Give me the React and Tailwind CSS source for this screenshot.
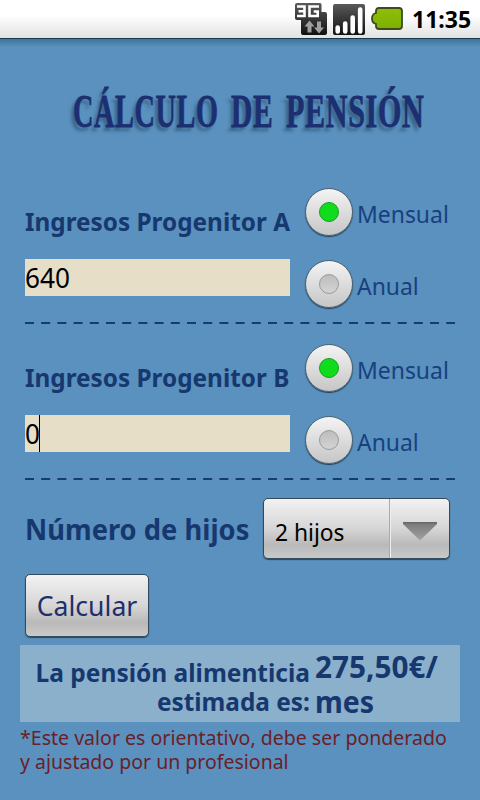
import React from 'react';

function StatusBar() {
  return (
    <div className="h-[38px] flex items-center justify-end pr-[9px] bg-linear-to-b from-white from-40% to-[#e2e2e2]">
      <svg className="mr-[6px]" width="32" height="34" viewBox="0 0 32 34">
        <defs>
          <linearGradient id="dark" x1="0" y1="0" x2="0" y2="1">
            <stop offset="0" stopColor="#5a5a5a" />
            <stop offset="1" stopColor="#111" />
          </linearGradient>
        </defs>
        <path d="M2 1h23q1.500 0 1.500 1.500V10H30q2 0 2 2v19q0 2-2 2H8q-2 0-2-2V18H2q-2 0-2-2V3q0-2 2-2z" fill="url(#dark)" />
        <path d="M2 4.500h7.500v9.500H2M3.500 9.200h6M24 4.500h-9.500v9.500h8.200V9.500h-4" fill="none" stroke="#fff" strokeWidth="2.600" />
        <path d="M14.500 18.500l5 6h-3v6h-4v-6h-3z" fill="#a0a0a0" />
        <path d="M24 31.500l-5-6h3v-6h4v6h3z" fill="#a0a0a0" />
      </svg>
      <svg className="mr-[6px]" width="32" height="34" viewBox="0 0 32 34">
        <rect x="0" y="2" width="32" height="31" rx="2" fill="url(#dark)" />
        <path d="M4.700 29.500v-4M12.200 29.500v-8M19.700 29.500v-14M27.200 29.500v-22" stroke="#fff" strokeWidth="4.600" strokeLinecap="round" />
      </svg>
      <svg className="mr-[9px]" width="32" height="26" viewBox="0 0 32 26">
        <defs>
          <linearGradient id="green" x1="0" y1="0" x2="0" y2="1">
            <stop offset="0" stopColor="#8fbe08" />
            <stop offset="1" stopColor="#7cb000" />
          </linearGradient>
        </defs>
        <path d="M8 2h20q3 0 3 3v15q0 3-3 3H8q-3 0-3-3v-2q-4-1-4-5.500T5 7V5q0-3 3-3z" fill="url(#green)" stroke="#3c4a1c" strokeWidth="1.800" />
      </svg>
      <span className="w-[59px] text-[23px] leading-[38px] font-bold text-black whitespace-nowrap">11:35</span>
    </div>
  );
}

function Radio({ label, checked }) {
  return (
    <div className="h-[72px] flex items-center gap-[4px]">
      <span className="w-[48px] h-[48px] shrink-0 rounded-full border border-[#4f6470] bg-linear-to-b from-[#f4f4f4] to-[#c6c6c6] shadow-[0_1px_1px_rgba(10,25,40,0.7)] flex items-center justify-center">
        {checked ? (
          <span className="w-[20px] h-[20px] rounded-full border border-[#1b9c22] bg-[#0fdc1c]" />
        ) : (
          <span className="w-[20px] h-[20px] rounded-full border border-[#999] bg-linear-to-b from-[#bdbdbd] to-[#d4d4d4]" />
        )}
      </span>
      <span className="mt-[3px] text-[24px] leading-[28px] text-[#18407f] whitespace-nowrap inline-block origin-left scale-x-[0.955]">{label}</span>
    </div>
  );
}

function Divider() {
  return (
    <svg className="block" width="430" height="2" viewBox="0 0 430 2">
      <path d="M0 1H430" stroke="#163a72" strokeWidth="2" strokeDasharray="9 7.200" />
    </svg>
  );
}

function Income({ title, value, focused }) {
  return (
    <section className="h-[156px]">
      <div className="h-[146px] flex gap-[15px]">
        <div className="w-[265px] pt-[29px]">
          <h2 className="text-[25px] leading-[32px] font-bold text-[#16386f] whitespace-nowrap">
            <span className="inline-block origin-left scale-x-[0.973]">{title}</span>
          </h2>
          <div className="mt-[22px] h-[37px] flex items-center bg-[#e6dec6] text-[27px] leading-[37px] text-black">
            <span className="inline-block origin-left scale-x-[0.97]">{value}</span>
            {focused && <span className="w-px h-[37px] bg-black -ml-px" />}
          </div>
        </div>
        <div>
          <Radio label="Mensual" checked />
          <Radio label="Anual" />
        </div>
      </div>
      <Divider />
    </section>
  );
}

export default function App() {
  return (
    <div className="w-[480px] h-[800px] overflow-hidden bg-[#5a91be] font-['Noto_Sans',sans-serif]">
      <StatusBar />
      <div className="h-[9px] border-t border-[#17384d] bg-linear-to-b from-[#3f749c] to-[#5a91be]" />
      <main className="px-[25px]">
        <h1 className="h-[129px] pt-[36px] pl-[48px] flex font-['Liberation_Serif',serif] font-bold text-[47px] leading-[56px] tracking-[1px] text-[#1c2f70] whitespace-nowrap [text-shadow:-5px_4px_4px_rgba(25,55,85,0.5)] [-webkit-text-stroke:0.8px_#1c2f70]">
          <span className="w-[158px]"><span className="inline-block origin-left scale-x-[0.602]">CÁLCULO</span></span>
          <span className="w-[55px]"><span className="inline-block origin-left scale-x-[0.63]">DE</span></span>
          <span className="w-[140px]"><span className="inline-block origin-left scale-x-[0.641]">PENSIÓN</span></span>
        </h1>
        <Income title="Ingresos Progenitor A" value="640" />
        <Income title="Ingresos Progenitor B" value="0" focused />
        <div className="h-[86px] pt-[10px] flex items-start">
          <div className="w-[238px] pt-[12px] text-[28px] leading-[38px] font-bold text-[#16386f] whitespace-nowrap">
            <span className="inline-block origin-left scale-x-[0.976]">Número de hijos</span>
          </div>
          <div className="w-[187px] h-[61px] flex rounded-[5px] border border-[#34495a] shadow-[0_1px_1px_rgba(10,25,40,0.6)] bg-[linear-gradient(#f2f2f2,#d6d6d6_50%,#b9b9b9_78%,#c9c9c9)]">
            <div className="w-[126px] pl-[11px] border-r border-[#aaa] text-[24px] leading-[65px] text-black whitespace-nowrap">
              <span className="inline-block origin-left scale-x-[0.95]">2 hijos</span>
            </div>
            <div className="flex-1 border-l border-[#eee] flex justify-center pt-[23px]">
              <svg width="34" height="19" viewBox="0 0 34 19">
                <defs>
                  <linearGradient id="arrow" x1="0" y1="0" x2="0" y2="1">
                    <stop offset="0" stopColor="#777" />
                    <stop offset="1" stopColor="#a2a2a2" />
                  </linearGradient>
                </defs>
                <path d="M0 0H34V2L17 18.500L0 2z" fill="url(#arrow)" />
                <path d="M0 .75H34" stroke="#686868" strokeWidth="1.500" />
              </svg>
            </div>
          </div>
        </div>
        <button className="w-[124px] h-[63px] pt-[2px] block rounded-[5px] border border-[#34495a] shadow-[0_1px_1px_rgba(10,25,40,0.6)] bg-[linear-gradient(#f2f2f2,#d6d6d6_50%,#b9b9b9_78%,#cacaca)] text-[27px] text-[#1f2f6c] whitespace-nowrap">
          <span className="inline-block scale-x-[0.985]">Calcular</span>
        </button>
      </main>
      <div className="mt-[8px] mx-[20px] h-[77px] flex gap-[5px] bg-[#8ab0cc] text-[#16386f] font-bold whitespace-nowrap">
        <div className="w-[290px] pt-[13px] text-[25px] leading-[29px]">
          <div className="flex justify-end"><span className="origin-right scale-x-[0.98]">La pensión alimenticia</span></div>
          <div className="flex justify-end"><span className="origin-right scale-x-[0.975]">estimada es:</span></div>
        </div>
        <div className="pt-[4px] text-[30px] leading-[35px]">
          <div><span className="inline-block origin-left scale-x-[0.99]">275,50€/</span></div>
          <div><span className="inline-block origin-left scale-x-[0.95]">mes</span></div>
        </div>
      </div>
      <p className="mt-[4px] mx-[20px] text-[20px] leading-[24px] text-[#6b2028] whitespace-nowrap">
        <span className="block w-fit origin-left scale-x-[0.977]">*Este valor es orientativo, debe ser ponderado</span>
        <span className="block w-fit origin-left scale-x-[0.975]">y ajustado por un profesional</span>
      </p>
    </div>
  );
}
